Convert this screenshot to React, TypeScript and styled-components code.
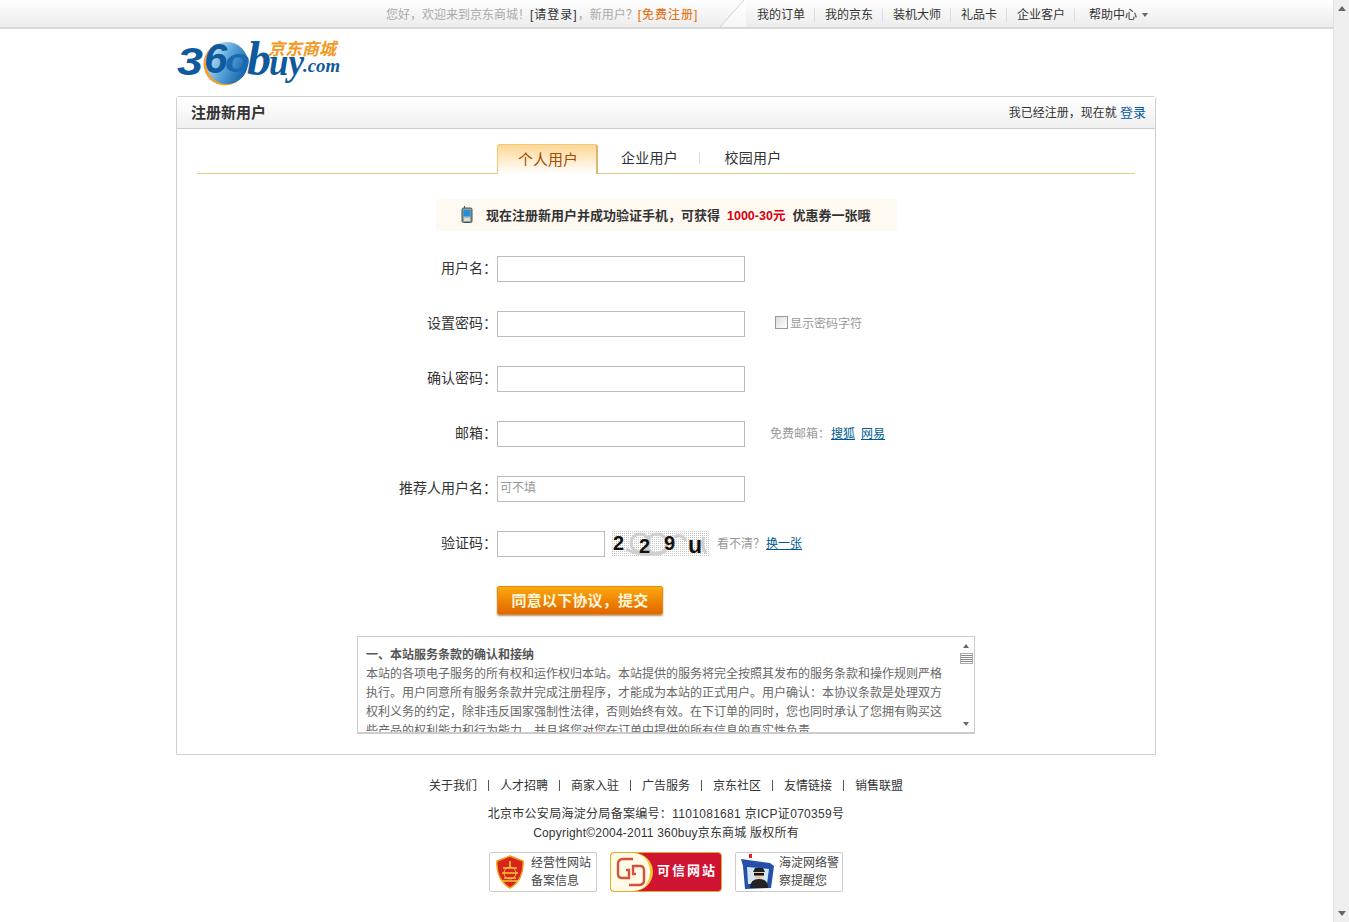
import React from 'react'
import styled, { createGlobalStyle } from 'styled-components'

const cjk = `"Liberation Sans", "Noto Sans CJK SC", sans-serif`

const GlobalStyle = createGlobalStyle`
  html, body {
    margin: 0;
    padding: 0;
    height: 922px;
    overflow: hidden;
    background: #fff;
  }
  * {
    box-sizing: border-box;
  }
`

const Shell = styled.div`
  display: flex;
  width: 1349px;
  height: 922px;
  font: 12px ${cjk};
  color: #333;
`

const Page = styled.div`
  width: 1333px;
  height: 922px;
  overflow: hidden;
`

const PageScroll = styled.div`
  width: 16px;
  height: 922px;
  background: #efefef;
  border-left: 1px solid #e2e2e2;
  display: flex;
  flex-direction: column;
  justify-content: space-between;
  align-items: center;
  padding: 6px 0;
`

const Arrow = styled.i<{ $down?: boolean; $small?: boolean }>`
  display: block;
  width: 0;
  height: 0;
  border-left: ${(p) => (p.$small ? 3 : 4)}px solid transparent;
  border-right: ${(p) => (p.$small ? 3 : 4)}px solid transparent;
  ${(p) => (p.$down ? 'border-top' : 'border-bottom')}: ${(p) => (p.$small ? 4 : 5)}px solid #666;
`

const TopBar = styled.div`
  height: 29px;
  background: linear-gradient(#fff, #f7f7f7 40%, #ececec);
  border-bottom: 2px solid #d8d8d8;
  display: flex;
  padding-left: 386px;
`

const Welcome = styled.div`
  width: 334px;
  line-height: 30px;
  color: #aaa;
  white-space: nowrap;
  b {
    font-weight: normal;
    color: #333;
    letter-spacing: 1px;
  }
  em {
    font-style: normal;
    color: #e56600;
    letter-spacing: 1px;
  }
`

const Slant = styled.svg`
  width: 26px;
  height: 27px;
  flex: none;
`

const TopLinks = styled.div`
  display: flex;
  align-items: center;
  height: 27px;
  padding: 2px 0 0 2px;
`

const TopLink = styled.a`
  color: #333;
  line-height: 14px;
  padding: 0 9px;
  margin-right: 1px;
  border-right: 1px solid #ddd;
  white-space: nowrap;
  &:last-child {
    border: 0;
    padding-left: 13px;
    display: flex;
    align-items: center;
    gap: 5px;
  }
`

const Wrap = styled.div`
  width: 980px;
  margin-left: 176px;
`

const LogoRow = styled.div`
  height: 67px;
  padding-top: 11px;
`

const Main = styled.div`
  height: 659px;
  border: 1px solid #d0d0d0;
  border-radius: 3px 3px 0 0;
`

const MainHead = styled.div`
  height: 32px;
  background: linear-gradient(#fff, #f0f0f0);
  border-bottom: 1px solid #ccc;
  display: flex;
  align-items: center;
  justify-content: space-between;
  padding: 0 9px 2px 14px;
  h2 {
    margin: 0;
    font-size: 15px;
    font-weight: bold;
    color: #333;
  }
  a {
    color: #005aa0;
    font-size: 13px;
  }
`

const Tabs = styled.div`
  margin: 15px 20px 0;
  height: 30px;
  border-bottom: 1px solid #eccb80;
  display: flex;
  padding-left: 300px;
`

const ActiveTab = styled.div`
  width: 101px;
  height: 30px;
  border: 1px solid #f0c779;
  border-bottom: 0;
  border-right: 2px solid #dcb673;
  border-radius: 3px 3px 0 0;
  background: linear-gradient(#fdd796, #fff);
  font-size: 15px;
  color: #a34c00;
  text-align: center;
  line-height: 30px;
  padding-left: 2px;
`

const Tab = styled.div<{ $w: number; $line?: boolean }>`
  width: ${(p) => p.$w}px;
  height: 12px;
  margin-top: 8px;
  padding-left: 2px;
  font-size: 14px;
  letter-spacing: 0.3px;
  line-height: 12px;
  text-align: center;
  color: #333;
  ${(p) => (p.$line ? 'border-right: 1px solid #ddd;' : '')}
`

const Promo = styled.div`
  width: 461px;
  height: 32px;
  margin: 25px 0 25px 259px;
  background: #fef9f1;
  border-radius: 3px;
  display: flex;
  align-items: center;
  padding: 0 0 2px 25px;
  font-size: 13px;
  font-weight: bold;
  color: #333;
  white-space: nowrap;
  svg {
    margin-right: 13px;
  }
  span {
    font-size: 12.5px;
    color: #d8000f;
    margin: 0 7px;
  }
`

const Row = styled.div`
  display: flex;
  align-items: center;
  height: 26px;
  margin-bottom: 29px;
`

const Label = styled.label`
  width: 320px;
  padding-bottom: 5px;
  text-align: right;
  font-size: 14px;
  color: #333;
  white-space: nowrap;
`

const Field = styled.input<{ $w?: number }>`
  width: ${(p) => p.$w ?? 248}px;
  height: 26px;
  border: 1px solid #bbb;
  padding: 0 2px 2px;
  background: #fff;
  font: 12px ${cjk};
  &::placeholder {
    color: #999;
  }
`

const Hint = styled.div<{ $left: number }>`
  margin-left: ${(p) => p.$left}px;
  padding-bottom: 3px;
  color: #999;
  display: flex;
  align-items: center;
  white-space: nowrap;
  a {
    color: #005a8f;
    text-decoration: underline;
    margin-left: 1px;
  }
  a + a {
    margin-left: 6px;
  }
`

const FakeCheck = styled.i`
  width: 13px;
  height: 13px;
  margin-right: 2px;
  border: 1px solid #999;
  background: linear-gradient(135deg, #ddd, #fff);
`

const Captcha = styled.svg`
  width: 98px;
  height: 26px;
  margin-left: 7px;
  flex: none;
`

const SubmitRow = styled.div`
  padding-left: 320px;
  height: 31px;
`

const Submit = styled.button`
  display: block;
  width: 166px;
  height: 29px;
  border: 1px solid #e98a10;
  border-radius: 2px;
  padding: 0 0 2px;
  background: linear-gradient(#fca90f, #f08a06 45%, #e26500);
  box-shadow: 0 1px 2px #999;
  color: #fff6d8;
  font: bold 15px ${cjk};
  letter-spacing: 0.2px;
`

const Terms = styled.div`
  width: 618px;
  height: 98px;
  margin: 19px 0 0 180px;
  border: 1px solid #ccc;
  border-bottom-width: 2px;
  display: flex;
  overflow: hidden;
`

const TermsText = styled.div`
  flex: 1;
  padding: 9px 8px 0;
  line-height: 19px;
  color: #666;
  overflow: hidden;
  h3 {
    margin: 0;
    font-size: 12px;
    font-weight: bold;
    line-height: 19px;
    color: #555;
  }
  p {
    margin: 0;
    width: 580px;
  }
`

const TermsScroll = styled.div`
  width: 16px;
  display: flex;
  flex-direction: column;
  align-items: center;
  padding: 7px 0 6px;
  background: #fff;
`

const Thumb = styled.i`
  width: 13px;
  height: 11px;
  margin-top: 5px;
  margin-bottom: auto;
  border: 1px solid #aaa;
  background: repeating-linear-gradient(#fff, #fff 1px, #888 1px, #888 2px);
`

const Footer = styled.div`
  text-align: center;
  color: #333;
`

const FootLinks = styled.div`
  margin-top: 24px;
  height: 14px;
  display: flex;
  justify-content: center;
  a {
    padding: 0 11px;
    line-height: 14px;
    border-right: 1px solid #555;
    height: 11px;
    margin-top: 1px;
    display: flex;
    align-items: center;
    white-space: nowrap;
  }
  a:last-child {
    border: 0;
  }
`

const FootLine = styled.div<{ $top: number; $spacing: number }>`
  margin-top: ${(p) => p.$top}px;
  line-height: 19px;
  letter-spacing: ${(p) => p.$spacing}px;
`

const Badges = styled.div`
  display: flex;
  justify-content: center;
  gap: 13px;
  margin-top: 9px;
`

const Badge = styled.div<{ $pad: number; $gap: number }>`
  width: 108px;
  height: 40px;
  border: 1px solid #ccc;
  border-radius: 2px;
  display: flex;
  align-items: center;
  padding-left: ${(p) => p.$pad}px;
  gap: ${(p) => p.$gap}px;
  text-align: left;
  line-height: 18px;
  color: #444;
  white-space: nowrap;
  svg {
    flex: none;
  }
`

const TrustBadge = styled.div`
  width: 112px;
  height: 40px;
  border: 1px solid #e7a92b;
  border-radius: 4px;
  overflow: hidden;
  display: flex;
  background: #cf1330;
`

const TrustIcon = styled.div`
  width: 42px;
  background: #fffbe6;
  border-right: 3px solid #f5c63a;
  border-radius: 0 20px 20px 0;
  display: flex;
  align-items: center;
  justify-content: center;
`

const TrustLabel = styled.div`
  flex: 1;
  color: #fff;
  font-size: 13px;
  font-weight: bold;
  line-height: 36px;
  text-align: center;
  letter-spacing: 2px;
`

function Logo() {
  return (
    <svg width="170" height="50" viewBox="0 0 170 50" style={{ display: 'block', overflow: 'visible' }}>
      <defs>
        <linearGradient id="ball" x1="0" y1="0.2" x2="1" y2="0.7">
          <stop offset="0" stopColor="#e4f1fa" />
          <stop offset="0.5" stopColor="#5aa4da" />
          <stop offset="1" stopColor="#0d5fa8" />
        </linearGradient>
      </defs>
      <circle cx="49" cy="24" r="21.5" fill="#f0a030" />
      <circle cx="51" cy="23" r="21" fill="url(#ball)" />
      <text x="1" y="35" fontFamily="Liberation Sans" fontSize="39" fontWeight="bold" fontStyle="italic" fill="#0f5a9c" textLength="26" lengthAdjust="spacingAndGlyphs">3</text>
      <text x="28" y="33" fontFamily="Liberation Sans" fontSize="42" fontWeight="bold" fontStyle="italic" fill="#0f5a9c">6</text>
      <text x="49" y="32" fontFamily="Liberation Sans" fontSize="34" fontWeight="bold" fontStyle="italic" fill="#1a6ab0" textLength="25" lengthAdjust="spacingAndGlyphs">o</text>
      <text x="71" y="35" fontFamily="Liberation Serif" fontSize="48" fontWeight="bold" fontStyle="italic" fill="#0f5a9c">b</text>
      <text x="93" y="35" fontFamily="Liberation Serif" fontSize="38" fontWeight="bold" fontStyle="italic" fill="#0f5a9c" textLength="35" lengthAdjust="spacingAndGlyphs">uy</text>
      <text x="127" y="32" fontFamily="Liberation Serif" fontSize="19" fontWeight="bold" fontStyle="italic" fill="#0f5a9c" textLength="37" lengthAdjust="spacingAndGlyphs">.com</text>
      <text x="92" y="15" fontFamily="Noto Sans CJK SC" fontSize="17" fontWeight="bold" fontStyle="italic" fill="#f39a1e" textLength="68" lengthAdjust="spacingAndGlyphs">京东商城</text>
    </svg>
  )
}

function PhoneIcon() {
  return (
    <svg width="12" height="17" viewBox="0 0 12 17">
      <rect x="3" y="0" width="1" height="3" fill="#555" />
      <rect x="1" y="2" width="10" height="14.5" rx="1.5" fill="#90a0a0" stroke="#40504f" />
      <rect x="2.5" y="4" width="7" height="6" fill="#1e90dc" />
      <rect x="3" y="11.5" width="6" height="3.5" fill="#d8dede" />
    </svg>
  )
}

function CaptchaImage() {
  return (
    <Captcha viewBox="0 0 98 26">
      <defs>
        <pattern id="dots" width="2" height="2" patternUnits="userSpaceOnUse">
          <rect width="1" height="1" fill="#c4c4c4" />
        </pattern>
      </defs>
      <rect width="98" height="26" fill="url(#dots)" />
      <g fill="none" stroke="#cfcfcf" strokeWidth="3">
        <circle cx="28" cy="12" r="9" />
        <circle cx="45" cy="13" r="10" />
        <path d="M14 18 q20 10 40 2 M62 6 q8 -4 12 4 M92 6 q-4 8 2 16" />
      </g>
      <g fontFamily="Liberation Sans" fontWeight="bold" fill="#111">
        <text x="1" y="19" fontSize="20">2</text>
        <text x="27" y="22" fontSize="20">2</text>
        <text x="52" y="19" fontSize="20">9</text>
        <text x="76" y="22" fontSize="23">u</text>
      </g>
    </Captcha>
  )
}

function ShieldIcon() {
  return (
    <svg width="30" height="34" viewBox="0 0 30 34">
      <path d="M15 1 L28 6 C29 18 24 28 15 33 C6 28 1 18 2 6Z" fill="#d7251b" stroke="#f0a020" strokeWidth="1.5" />
      <path d="M15 6 V12 M8 13 H22 M7 18 H23 M9 23 H21 M6 26 H24" stroke="#f6c63a" strokeWidth="1.6" fill="none" />
      <circle cx="15" cy="18" r="6" fill="none" stroke="#f6c63a" />
    </svg>
  )
}

function TrustMark() {
  return (
    <svg width="30" height="30" viewBox="0 0 30 30" fill="none" stroke="#d5503f" strokeWidth="2.4">
      <path d="M17 2 H7 Q2 2 2 7 V17 Q2 21 6 21 H13 V13 H10" />
      <path d="M13 28 H23 Q28 28 28 23 V13 Q28 9 24 9 H17 V17 H20" />
    </svg>
  )
}

function PoliceIcon() {
  return (
    <svg width="36" height="36" viewBox="0 0 36 36">
      <rect x="9" y="0" width="3" height="4" fill="#d22" />
      <path d="M1 5 L30 9 L34 12 L31 34 L5 35 L3 12Z" fill="#2450a8" />
      <path d="M7 13 L29 15 L27 30 L8 30Z" fill="#cfe6f5" />
      <circle cx="19" cy="20" r="5" fill="#e9c9a8" />
      <path d="M13 18 h12 l-2 -4 h-8z" fill="#222" />
      <path d="M10 34 q0 -9 9 -9 q9 0 9 9z" fill="#222" />
      <rect x="14" y="19" width="10" height="2.5" fill="#111" />
    </svg>
  )
}

const topLinks = ['我的订单', '我的京东', '装机大师', '礼品卡', '企业客户']
const footLinks = ['关于我们', '人才招聘', '商家入驻', '广告服务', '京东社区', '友情链接', '销售联盟']

export default function App() {
  return (
    <Shell>
      <GlobalStyle />
      <Page>
        <TopBar>
          <Welcome>
            您好，欢迎来到京东商城！<b>[请登录]</b>，新用户？<em>[免费注册]</em>
          </Welcome>
          <Slant viewBox="0 0 26 27">
            <path d="M0 27 L24 0" stroke="#d4d4d4" fill="none" />
            <path d="M1 27 L25 0 H26 V27Z" fill="#fff" opacity="0.55" />
          </Slant>
          <TopLinks>
            {topLinks.map((t) => (
              <TopLink key={t}>{t}</TopLink>
            ))}
            <TopLink>
              帮助中心 <Arrow $down $small />
            </TopLink>
          </TopLinks>
        </TopBar>
        <Wrap>
          <LogoRow>
            <Logo />
          </LogoRow>
          <Main>
            <MainHead>
              <h2>注册新用户</h2>
              <div>
                我已经注册，现在就 <a>登录</a>
              </div>
            </MainHead>
            <Tabs>
              <ActiveTab>个人用户</ActiveTab>
              <Tab $w={102} $line>企业用户</Tab>
              <Tab $w={104}>校园用户</Tab>
            </Tabs>
            <Promo>
              <PhoneIcon />
              现在注册新用户并成功验证手机，可获得<span>1000-30元</span>优惠券一张哦
            </Promo>
            <Row>
              <Label>用户名：</Label>
              <Field />
            </Row>
            <Row>
              <Label>设置密码：</Label>
              <Field type="password" />
              <Hint $left={30}>
                <FakeCheck />
                显示密码字符
              </Hint>
            </Row>
            <Row>
              <Label>确认密码：</Label>
              <Field type="password" />
            </Row>
            <Row>
              <Label>邮箱：</Label>
              <Field />
              <Hint $left={25}>
                免费邮箱：<a>搜狐</a>
                <a>网易</a>
              </Hint>
            </Row>
            <Row>
              <Label>推荐人用户名：</Label>
              <Field placeholder="可不填" />
            </Row>
            <Row>
              <Label>验证码：</Label>
              <Field $w={108} />
              <CaptchaImage />
              <Hint $left={7}>
                看不清？<a>换一张</a>
              </Hint>
            </Row>
            <SubmitRow>
              <Submit>同意以下协议，提交</Submit>
            </SubmitRow>
            <Terms>
              <TermsText>
                <h3>一、本站服务条款的确认和接纳</h3>
                <p>
                  本站的各项电子服务的所有权和运作权归本站。本站提供的服务将完全按照其发布的服务条款和操作规则严格执行。用户同意所有服务条款并完成注册程序，才能成为本站的正式用户。用户确认：本协议条款是处理双方权利义务的约定，除非违反国家强制性法律，否则始终有效。在下订单的同时，您也同时承认了您拥有购买这些产品的权利能力和行为能力，并且将您对您在订单中提供的所有信息的真实性负责。
                </p>
              </TermsText>
              <TermsScroll>
                <Arrow $small />
                <Thumb />
                <Arrow $down $small />
              </TermsScroll>
            </Terms>
          </Main>
          <Footer>
            <FootLinks>
              {footLinks.map((t) => (
                <a key={t}>{t}</a>
              ))}
            </FootLinks>
            <FootLine $top={12} $spacing={0.3}>北京市公安局海淀分局备案编号：1101081681 京ICP证070359号</FootLine>
            <FootLine $top={0} $spacing={0.2}>Copyright©2004-2011 360buy京东商城 版权所有</FootLine>
            <Badges>
              <Badge $pad={5} $gap={6}>
                <ShieldIcon />
                <div>
                  经营性网站
                  <br />
                  备案信息
                </div>
              </Badge>
              <TrustBadge>
                <TrustIcon>
                  <TrustMark />
                </TrustIcon>
                <TrustLabel>可信网站</TrustLabel>
              </TrustBadge>
              <Badge $pad={4} $gap={3}>
                <PoliceIcon />
                <div>
                  海淀网络警
                  <br />
                  察提醒您
                </div>
              </Badge>
            </Badges>
          </Footer>
        </Wrap>
      </Page>
      <PageScroll>
        <Arrow />
        <Arrow $down />
      </PageScroll>
    </Shell>
  )
}
